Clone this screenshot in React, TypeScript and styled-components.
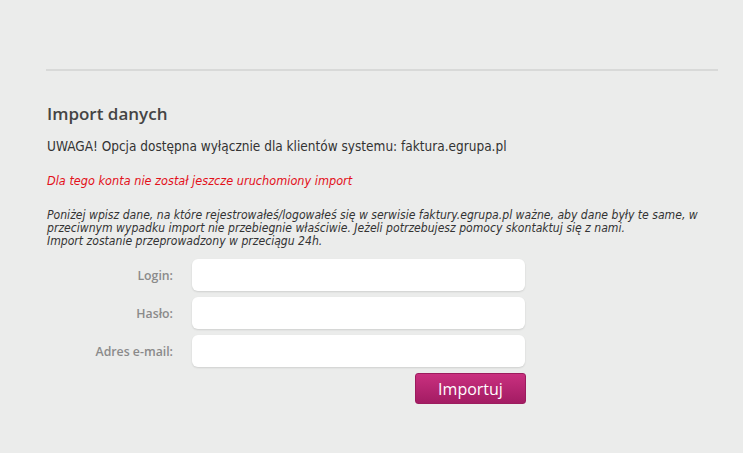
import React from "react";
import styled, { createGlobalStyle } from "styled-components";

const GlobalStyle = createGlobalStyle`
  html, body { margin: 0; padding: 0; }
  body {
    background: #ebeceb;
    font-family: "DejaVu Sans Condensed", "DejaVu Sans", sans-serif;
    color: #333;
  }
`;

const Page = styled.div`
  padding: 69px 25px 0 46px;
`;

const Divider = styled.hr`
  margin: 0;
  border: 0;
  height: 2px;
  background: #d8d9d8;
`;

const Section = styled.section`
  padding: 31px 0 0 1px;
`;

const Title = styled.h2`
  margin: 0;
  font-family: "Open Sans", sans-serif;
  font-weight: 600;
  font-size: 17px;
  line-height: 24px;
  color: #444;
`;

const Notice = styled.p`
  margin: 11px 0 0;
  font-size: 13.5px;
  line-height: 18px;
  color: #333;
`;

const Warning = styled.p`
  margin: 18px 0 0;
  font-size: 12.6px;
  font-style: italic;
  line-height: 16px;
  color: #e3101a;
`;

const Info = styled.p`
  margin: 20px 0 0;
  font-size: 12.1px;
  font-style: italic;
  line-height: 13px;
  color: #333;
`;

const Form = styled.form`
  display: grid;
  grid-template-columns: 126px 333px;
  column-gap: 19px;
  row-gap: 6px;
  margin-top: 11px;
  align-items: center;
`;

const Label = styled.label`
  text-align: right;
  font-family: "Open Sans", sans-serif;
  font-weight: 600;
  font-size: 12.3px;
  color: #8a8a8a;
`;

const Input = styled.input`
  box-sizing: border-box;
  height: 32px;
  width: 100%;
  border: 0;
  border-radius: 6px;
  background: #fff;
  box-shadow: 0 1px 2px rgba(0, 0, 0, 0.12);
  padding: 0 10px;
  font-size: 13px;
  outline: none;
`;

const Actions = styled.div`
  grid-column: 2;
  display: flex;
  justify-content: flex-end;
`;

const Button = styled.button`
  width: 111px;
  height: 31px;
  margin-right: -1px;
  border: 1px solid #9c1c5e;
  border-radius: 3px;
  background: linear-gradient(#c9307f, #a31c63);
  color: #fff;
  font-family: "Open Sans", sans-serif;
  font-size: 16px;
  cursor: pointer;
`;

export default function App() {
  return (
    <>
      <GlobalStyle />
      <Page>
        <Divider />
        <Section>
          <Title>Import danych</Title>
          <Notice>UWAGA! Opcja dostępna wyłącznie dla klientów systemu: faktura.egrupa.pl</Notice>
          <Warning>Dla tego konta nie został jeszcze uruchomiony import</Warning>
          <Info>
            Poniżej wpisz dane, na które rejestrowałeś/logowałeś się w serwisie faktury.egrupa.pl ważne, aby dane były te same, w
            przeciwnym wypadku import nie przebiegnie właściwie. Jeżeli potrzebujesz pomocy skontaktuj się z nami.
            <br />
            Import zostanie przeprowadzony w przeciągu 24h.
          </Info>
          <Form onSubmit={(e) => e.preventDefault()}>
            <Label htmlFor="login">Login:</Label>
            <Input id="login" type="text" />
            <Label htmlFor="haslo">Hasło:</Label>
            <Input id="haslo" type="password" />
            <Label htmlFor="email">Adres e-mail:</Label>
            <Input id="email" type="email" />
            <Actions>
              <Button type="submit">Importuj</Button>
            </Actions>
          </Form>
        </Section>
      </Page>
    </>
  );
}
